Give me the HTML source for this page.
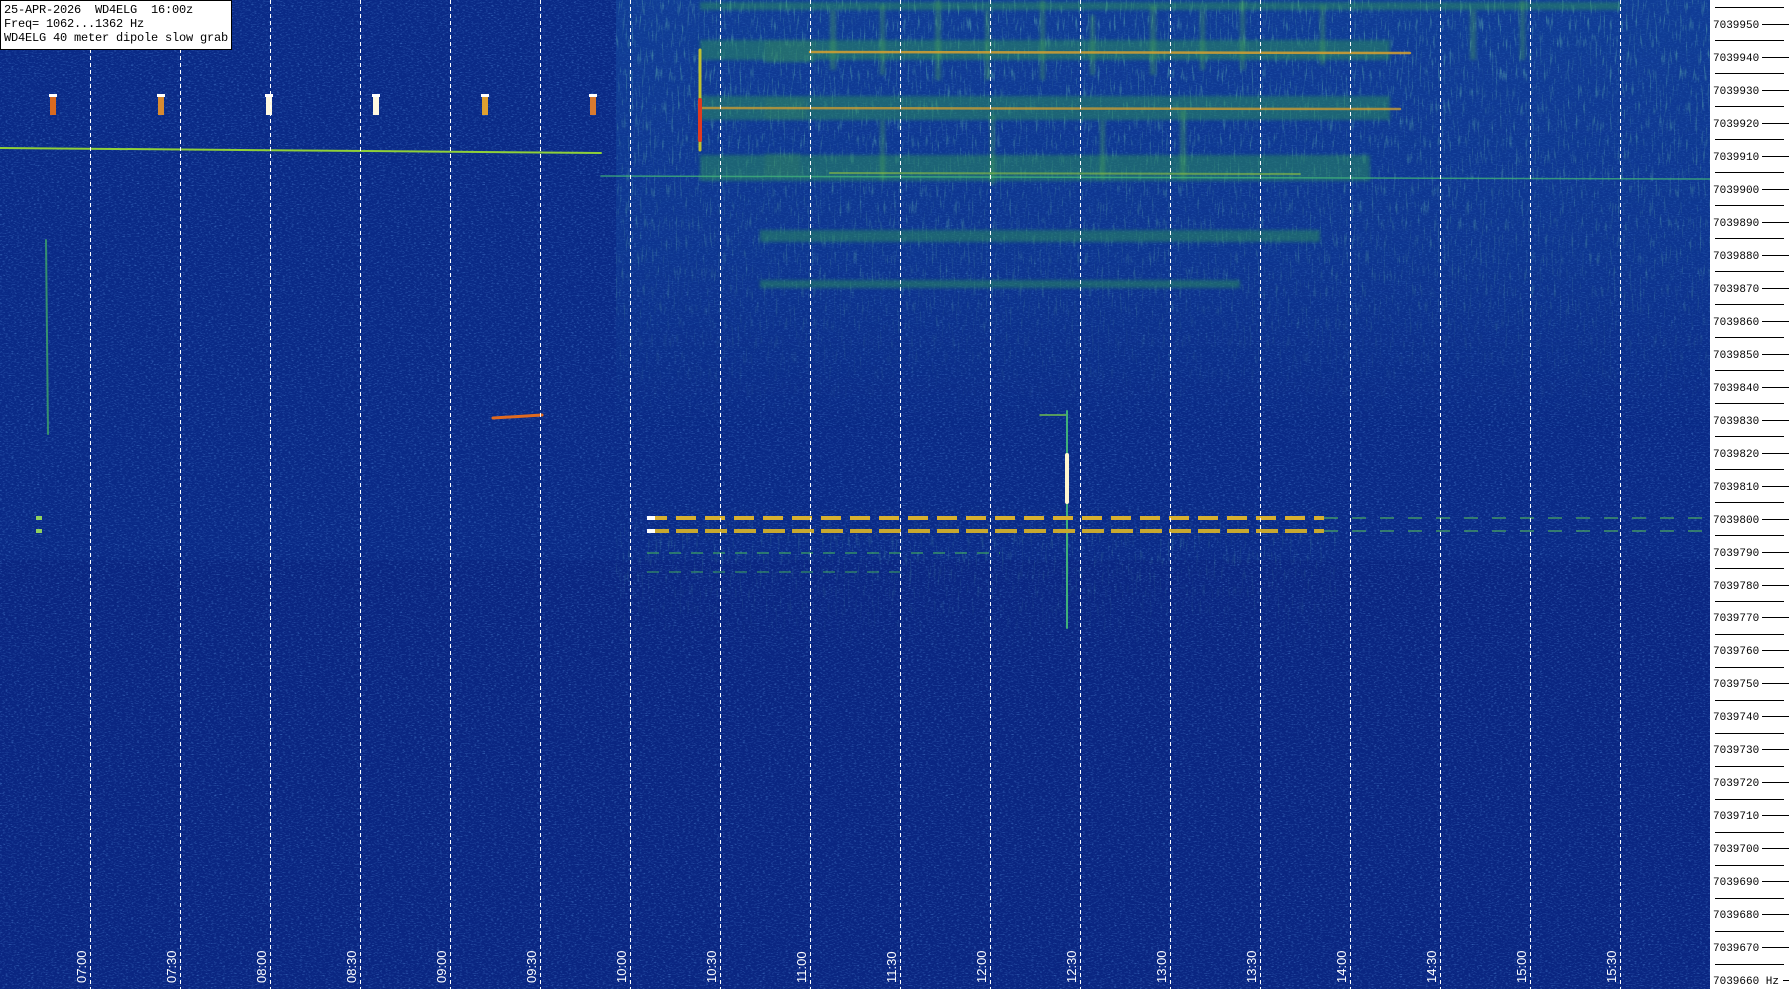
<!DOCTYPE html>
<html><head><meta charset="utf-8"><style>
html,body{margin:0;padding:0;background:#fff;}
body{width:1789px;height:989px;overflow:hidden;position:relative;}
svg{position:absolute;left:0;top:0;}
.box{position:absolute;left:0;top:0;width:227px;height:46px;background:#fff;border:1px solid #000;font-family:"Liberation Mono",monospace;font-size:12px;line-height:14px;color:#000;padding:2px 0 0 3px;white-space:pre;letter-spacing:-0.2px;}
</style></head><body>
<svg width="1789" height="989" viewBox="0 0 1789 989" xmlns="http://www.w3.org/2000/svg">
<defs>
<filter id="nz" x="0" y="0" width="100%" height="100%">
<feTurbulence type="fractalNoise" baseFrequency="0.35 0.9" numOctaves="2" seed="3"/>
<feColorMatrix type="matrix" values="0 0 0 0 0.1  0 0 0 0 0.3  0 0 0 0 0.75  0 0 0 3 -1.6"/>
</filter>
<filter id="nz2" x="0" y="0" width="100%" height="100%">
<feTurbulence type="fractalNoise" baseFrequency="0.5 0.06" numOctaves="2" seed="7"/>
<feColorMatrix type="matrix" values="0 0 0 0 0.15  0 0 0 0 0.55  0 0 0 0 0.45  0 0 0 4 -2.3"/>
</filter>
<filter id="bl"><feGaussianBlur stdDeviation="1.5"/></filter>
<linearGradient id="fade" x1="0" y1="0" x2="0" y2="1">
<stop offset="0" stop-color="#fff"/><stop offset="0.6" stop-color="#fff" stop-opacity="0.6"/><stop offset="1" stop-color="#fff" stop-opacity="0"/>
</linearGradient>
<linearGradient id="fade2" x1="0" y1="0" x2="0" y2="1">
<stop offset="0" stop-color="#fff" stop-opacity="0"/><stop offset="0.3" stop-color="#fff" stop-opacity="0.7"/><stop offset="1" stop-color="#fff" stop-opacity="0"/>
</linearGradient>
<mask id="m1"><rect x="0" y="0" width="1710" height="430" fill="url(#fade)"/></mask>
<mask id="m2"><rect x="616" y="500" width="720" height="160" fill="url(#fade2)"/></mask>
</defs>
<rect x="0" y="0" width="1710" height="989" fill="#0a2a87"/>
<rect x="0" y="560" width="1710" height="429" fill="#0a2682"/>
<rect x="0" y="0" width="1710" height="989" filter="url(#nz)" opacity="0.5"/>
<g mask="url(#m1)">
<rect x="616" y="0" width="1094" height="430" fill="#164ca2" opacity="0.55"/>
<rect x="616" y="0" width="1094" height="430" filter="url(#nz2)" opacity="0.45"/>
</g>
<rect x="616" y="500" width="720" height="160" filter="url(#nz2)" opacity="0.3" mask="url(#m2)"/>
<!-- green bands -->
<g fill="#2f9a55" opacity="0.45" filter="url(#bl)">
<rect x="700" y="2" width="920" height="8"/>
<rect x="700" y="40" width="690" height="20"/>
<rect x="700" y="96" width="690" height="24"/>
<rect x="700" y="155" width="670" height="26"/>
<rect x="760" y="230" width="560" height="12"/>
<rect x="760" y="280" width="480" height="8"/>
<rect x="765" y="40" width="50" height="22" fill="#3aa84a"/>
<rect x="765" y="98" width="40" height="22" fill="#3aa84a"/>
<rect x="765" y="154" width="35" height="22" fill="#3aa84a"/>
</g>
<g fill="#4fae52" opacity="0.35" filter="url(#bl)">
<rect x="830" y="10" width="6" height="60"/><rect x="880" y="5" width="5" height="70"/><rect x="935" y="0" width="6" height="80"/>
<rect x="985" y="10" width="5" height="70"/><rect x="1040" y="0" width="5" height="80"/><rect x="1090" y="15" width="5" height="60"/>
<rect x="1150" y="5" width="6" height="70"/><rect x="1200" y="10" width="5" height="60"/><rect x="1240" y="0" width="5" height="70"/>
<rect x="1320" y="5" width="5" height="60"/><rect x="1470" y="10" width="6" height="50"/><rect x="1520" y="0" width="5" height="60"/>
<rect x="880" y="120" width="5" height="60"/><rect x="990" y="115" width="5" height="70"/><rect x="1100" y="120" width="5" height="60"/><rect x="1180" y="110" width="6" height="70"/>
</g>
<!-- bright lines -->
<g stroke-linecap="round">
<line x1="0" y1="148" x2="601" y2="153" stroke="#8fd03a" stroke-width="2"/>
<line x1="601" y1="176" x2="1710" y2="179" stroke="#3fb07a" stroke-width="1.5" opacity="0.8"/>
<line x1="810" y1="52" x2="1410" y2="53" stroke="#d8a030" stroke-width="2.5" opacity="0.85"/>
<line x1="700" y1="108" x2="1400" y2="109" stroke="#c89a35" stroke-width="2.5" opacity="0.8"/>
<line x1="830" y1="173" x2="1300" y2="174" stroke="#8ec040" stroke-width="2" opacity="0.6"/>
<line x1="493" y1="418" x2="542" y2="415" stroke="#e06a20" stroke-width="3"/>
<line x1="1040" y1="415" x2="1067" y2="415" stroke="#6fbf50" stroke-width="1.5"/>
<line x1="46" y1="240" x2="48" y2="434" stroke="#3fa86a" stroke-width="2" opacity="0.8"/>
<line x1="1067" y1="411" x2="1067" y2="628" stroke="#3fb07a" stroke-width="2"/>
<line x1="1067" y1="455" x2="1067" y2="502" stroke="#fff6d0" stroke-width="4"/>
<line x1="700" y1="50" x2="700" y2="150" stroke="#c0c030" stroke-width="3"/>
<line x1="700" y1="100" x2="700" y2="140" stroke="#e03a20" stroke-width="4"/>
</g>
<!-- pips -->
<g>
<rect x="50" y="95" width="6" height="20" fill="#d86a20"/><rect x="49" y="94" width="8" height="3" fill="#fff"/>
<rect x="158" y="95" width="6" height="20" fill="#d88a30"/><rect x="157" y="94" width="8" height="3" fill="#fff"/>
<rect x="266" y="95" width="6" height="20" fill="#fff8e0"/><rect x="265" y="94" width="8" height="3" fill="#fff"/>
<rect x="373" y="95" width="6" height="20" fill="#fff8e0"/><rect x="372" y="94" width="8" height="3" fill="#fff"/>
<rect x="482" y="95" width="6" height="20" fill="#e0a030"/><rect x="481" y="94" width="8" height="3" fill="#fff"/>
<rect x="590" y="95" width="6" height="20" fill="#d87a30"/><rect x="589" y="94" width="8" height="3" fill="#fff"/>
</g>
<!-- CW dotted signals -->
<g stroke-width="4">
<line x1="647" y1="518" x2="1324" y2="518" stroke="#d8b030" stroke-dasharray="20,9"/>
<line x1="647" y1="531" x2="1324" y2="531" stroke="#c8a830" stroke-dasharray="22,7"/>
<line x1="1324" y1="518" x2="1710" y2="518" stroke="#4fb060" stroke-width="2" stroke-dasharray="14,14" opacity="0.6"/>
<line x1="1324" y1="531" x2="1710" y2="531" stroke="#4fb060" stroke-width="2" stroke-dasharray="14,14" opacity="0.6"/>
<line x1="647" y1="553" x2="1000" y2="553" stroke="#3fa860" stroke-width="2" stroke-dasharray="12,10" opacity="0.6"/>
<line x1="647" y1="572" x2="900" y2="572" stroke="#3fa860" stroke-width="2" stroke-dasharray="12,10" opacity="0.5"/>
<line x1="36" y1="518" x2="42" y2="518" stroke="#8fd060"/>
<line x1="36" y1="531" x2="42" y2="531" stroke="#8fd060"/>
</g>
<line x1="647" y1="518" x2="655" y2="518" stroke="#fff" stroke-width="4"/>
<line x1="647" y1="531" x2="655" y2="531" stroke="#fff" stroke-width="4"/>
<!-- grid -->
<g stroke="#fff" stroke-width="1" stroke-dasharray="4,3">
<line x1="90.5" y1="0" x2="90.5" y2="989"/><line x1="180.5" y1="0" x2="180.5" y2="989"/><line x1="270.5" y1="0" x2="270.5" y2="989"/>
<line x1="360.5" y1="0" x2="360.5" y2="989"/><line x1="450.5" y1="0" x2="450.5" y2="989"/><line x1="540.5" y1="0" x2="540.5" y2="989"/>
<line x1="630.5" y1="0" x2="630.5" y2="989"/><line x1="720.5" y1="0" x2="720.5" y2="989"/><line x1="810.5" y1="0" x2="810.5" y2="989"/>
<line x1="900.5" y1="0" x2="900.5" y2="989"/><line x1="990.5" y1="0" x2="990.5" y2="989"/><line x1="1080.5" y1="0" x2="1080.5" y2="989"/>
<line x1="1170.5" y1="0" x2="1170.5" y2="989"/><line x1="1260.5" y1="0" x2="1260.5" y2="989"/><line x1="1350.5" y1="0" x2="1350.5" y2="989"/>
<line x1="1440.5" y1="0" x2="1440.5" y2="989"/><line x1="1530.5" y1="0" x2="1530.5" y2="989"/><line x1="1620.5" y1="0" x2="1620.5" y2="989"/>
</g>
<!-- time labels -->
<g fill="#fff" font-family="Liberation Sans, sans-serif" font-size="13">
<text transform="translate(86,983) rotate(-90)">07:00</text>
<text transform="translate(176,983) rotate(-90)">07:30</text>
<text transform="translate(266,983) rotate(-90)">08:00</text>
<text transform="translate(356,983) rotate(-90)">08:30</text>
<text transform="translate(446,983) rotate(-90)">09:00</text>
<text transform="translate(536,983) rotate(-90)">09:30</text>
<text transform="translate(626,983) rotate(-90)">10:00</text>
<text transform="translate(716,983) rotate(-90)">10:30</text>
<text transform="translate(806,983) rotate(-90)">11:00</text>
<text transform="translate(896,983) rotate(-90)">11:30</text>
<text transform="translate(986,983) rotate(-90)">12:00</text>
<text transform="translate(1076,983) rotate(-90)">12:30</text>
<text transform="translate(1166,983) rotate(-90)">13:00</text>
<text transform="translate(1256,983) rotate(-90)">13:30</text>
<text transform="translate(1346,983) rotate(-90)">14:00</text>
<text transform="translate(1436,983) rotate(-90)">14:30</text>
<text transform="translate(1526,983) rotate(-90)">15:00</text>
<text transform="translate(1616,983) rotate(-90)">15:30</text>
</g>
<!-- right scale -->
<rect x="1710" y="0" width="79" height="989" fill="#fff"/>
<g stroke="#000" stroke-width="1">
<line x1="1715" y1="7.5" x2="1784" y2="7.5"/><line x1="1762" y1="24.5" x2="1789" y2="24.5"/>
<line x1="1715" y1="40.5" x2="1784" y2="40.5"/><line x1="1762" y1="57.5" x2="1789" y2="57.5"/>
<line x1="1715" y1="73.5" x2="1784" y2="73.5"/><line x1="1762" y1="90.5" x2="1789" y2="90.5"/>
<line x1="1715" y1="106.5" x2="1784" y2="106.5"/><line x1="1762" y1="123.5" x2="1789" y2="123.5"/>
<line x1="1715" y1="139.5" x2="1784" y2="139.5"/><line x1="1762" y1="156.5" x2="1789" y2="156.5"/>
<line x1="1715" y1="172.5" x2="1784" y2="172.5"/><line x1="1762" y1="189.5" x2="1789" y2="189.5"/>
<line x1="1715" y1="205.5" x2="1784" y2="205.5"/><line x1="1762" y1="222.5" x2="1789" y2="222.5"/>
<line x1="1715" y1="238.5" x2="1784" y2="238.5"/><line x1="1762" y1="255.5" x2="1789" y2="255.5"/>
<line x1="1715" y1="271.5" x2="1784" y2="271.5"/><line x1="1762" y1="288.5" x2="1789" y2="288.5"/>
<line x1="1715" y1="304.5" x2="1784" y2="304.5"/><line x1="1762" y1="321.5" x2="1789" y2="321.5"/>
<line x1="1715" y1="337.5" x2="1784" y2="337.5"/><line x1="1762" y1="354.5" x2="1789" y2="354.5"/>
<line x1="1715" y1="370.5" x2="1784" y2="370.5"/><line x1="1762" y1="387.5" x2="1789" y2="387.5"/>
<line x1="1715" y1="403.5" x2="1784" y2="403.5"/><line x1="1762" y1="420.5" x2="1789" y2="420.5"/>
<line x1="1715" y1="436.5" x2="1784" y2="436.5"/><line x1="1762" y1="453.5" x2="1789" y2="453.5"/>
<line x1="1715" y1="469.5" x2="1784" y2="469.5"/><line x1="1762" y1="486.5" x2="1789" y2="486.5"/>
<line x1="1715" y1="502.5" x2="1784" y2="502.5"/><line x1="1762" y1="519.5" x2="1789" y2="519.5"/>
<line x1="1715" y1="535.5" x2="1784" y2="535.5"/><line x1="1762" y1="552.5" x2="1789" y2="552.5"/>
<line x1="1715" y1="568.5" x2="1784" y2="568.5"/><line x1="1762" y1="585.5" x2="1789" y2="585.5"/>
<line x1="1715" y1="601.5" x2="1784" y2="601.5"/><line x1="1762" y1="617.5" x2="1789" y2="617.5"/>
<line x1="1715" y1="634.5" x2="1784" y2="634.5"/><line x1="1762" y1="650.5" x2="1789" y2="650.5"/>
<line x1="1715" y1="667.5" x2="1784" y2="667.5"/><line x1="1762" y1="683.5" x2="1789" y2="683.5"/>
<line x1="1715" y1="700.5" x2="1784" y2="700.5"/><line x1="1762" y1="716.5" x2="1789" y2="716.5"/>
<line x1="1715" y1="733.5" x2="1784" y2="733.5"/><line x1="1762" y1="749.5" x2="1789" y2="749.5"/>
<line x1="1715" y1="766.5" x2="1784" y2="766.5"/><line x1="1762" y1="782.5" x2="1789" y2="782.5"/>
<line x1="1715" y1="799.5" x2="1784" y2="799.5"/><line x1="1762" y1="815.5" x2="1789" y2="815.5"/>
<line x1="1715" y1="832.5" x2="1784" y2="832.5"/><line x1="1762" y1="848.5" x2="1789" y2="848.5"/>
<line x1="1715" y1="865.5" x2="1784" y2="865.5"/><line x1="1762" y1="881.5" x2="1789" y2="881.5"/>
<line x1="1715" y1="898.5" x2="1784" y2="898.5"/><line x1="1762" y1="914.5" x2="1789" y2="914.5"/>
<line x1="1715" y1="931.5" x2="1784" y2="931.5"/><line x1="1762" y1="947.5" x2="1789" y2="947.5"/>
<line x1="1715" y1="964.5" x2="1784" y2="964.5"/><line x1="1783" y1="980.5" x2="1789" y2="980.5"/>
</g>
<g fill="#000" font-family="Liberation Mono, monospace" font-size="11">
<text x="1713" y="28">7039950</text><text x="1713" y="61">7039940</text><text x="1713" y="94">7039930</text>
<text x="1713" y="127">7039920</text><text x="1713" y="160">7039910</text><text x="1713" y="193">7039900</text>
<text x="1713" y="226">7039890</text><text x="1713" y="259">7039880</text><text x="1713" y="292">7039870</text>
<text x="1713" y="325">7039860</text><text x="1713" y="358">7039850</text><text x="1713" y="391">7039840</text>
<text x="1713" y="424">7039830</text><text x="1713" y="457">7039820</text><text x="1713" y="490">7039810</text>
<text x="1713" y="523">7039800</text><text x="1713" y="556">7039790</text><text x="1713" y="589">7039780</text>
<text x="1713" y="621">7039770</text><text x="1713" y="654">7039760</text><text x="1713" y="687">7039750</text>
<text x="1713" y="720">7039740</text><text x="1713" y="753">7039730</text><text x="1713" y="786">7039720</text>
<text x="1713" y="819">7039710</text><text x="1713" y="852">7039700</text><text x="1713" y="885">7039690</text>
<text x="1713" y="918">7039680</text><text x="1713" y="951">7039670</text><text x="1713" y="984">7039660 Hz</text>
</g>
</svg>
<div class="box">25-APR-2026  WD4ELG  16:00z
Freq= 1062...1362 Hz
WD4ELG 40 meter dipole slow grab</div>
</body></html>
